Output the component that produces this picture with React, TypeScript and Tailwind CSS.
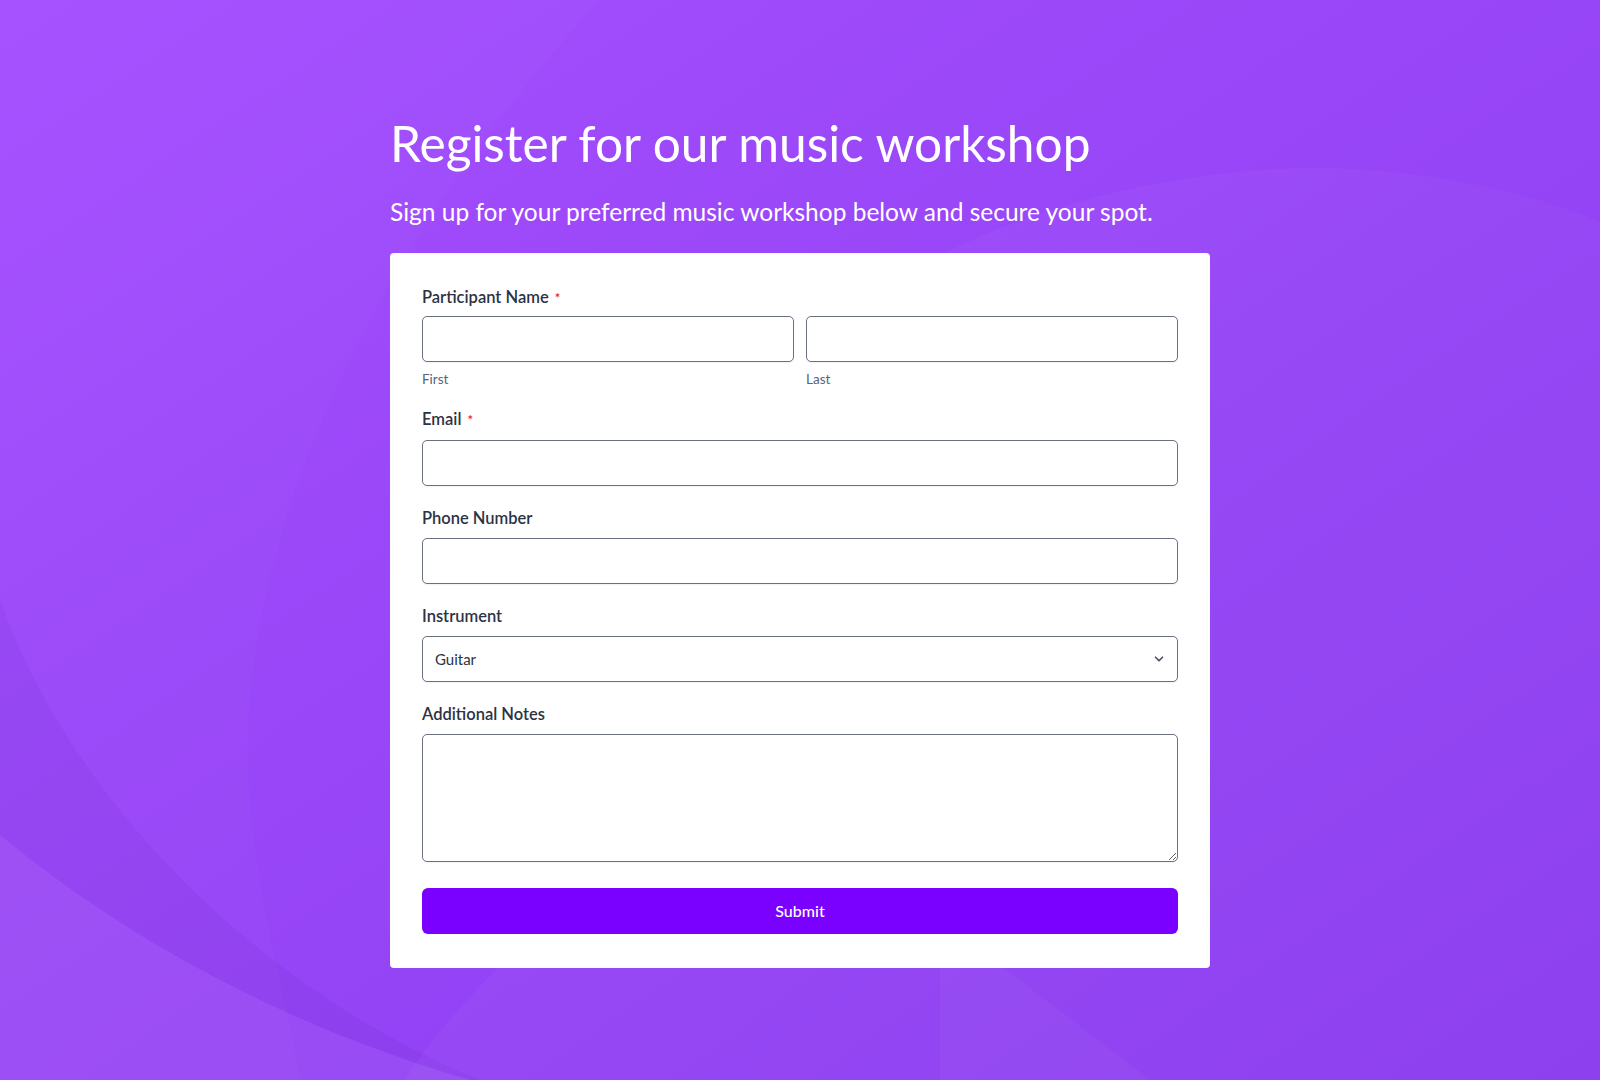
import { ChevronDown } from 'lucide-react';

const font = { fontFamily: 'Lato, "Noto Sans", sans-serif' };

function Label({ text, required, tight }: { text: string; required?: boolean; tight?: boolean }) {
  return (
    <label className={`${tight ? 'mb-1.5' : 'mb-2'} block text-[16.5px] leading-6 font-semibold text-[#2c3345]`}>
      {text}
      {required && <span className="ml-1.5 text-[13px] text-[#e4201b]">*</span>}
    </label>
  );
}

const inputClass =
  'block h-[46px] w-full rounded-[5px] border border-[#6b7180] bg-white px-3 text-[15px] text-[#2c3345] shadow-[0_1px_2px_rgba(0,0,0,0.06)] outline-none';

function Backdrop() {
  return (
    <svg className="absolute inset-0 h-full w-full" viewBox="0 0 1600 1080" preserveAspectRatio="none">
      <defs>
        <linearGradient id="bg" x1="0" y1="0" x2="1" y2="1">
          <stop offset="0" stopColor="#a64fff" />
          <stop offset="0.55" stopColor="#9544f6" />
          <stop offset="1" stopColor="#8a3aee" />
        </linearGradient>
      </defs>
      <rect width="1600" height="1080" fill="url(#bg)" />
      <path d="M940 255 C1080 185 1250 160 1370 170 C1470 178 1550 200 1600 222 L1600 1080 L940 1080 Z" fill="#ffffff" opacity="0.03" />
      <path d="M600 0 C360 260 230 560 250 800 C262 930 290 1010 300 1080 L0 1080 L0 0 Z" fill="#ffffff" opacity="0.02" />
      <path d="M0 600 C70 800 260 990 480 1080 L0 1080 Z" fill="#5b1fb0" opacity="0.09" />
      <path d="M0 835 C140 950 300 1030 470 1080 L0 1080 Z" fill="#b46bff" opacity="0.3" />
      <path d="M405 1080 C430 1040 470 995 500 965 L1000 965 L1150 1080 Z" fill="#ffffff" opacity="0.035" />
    </svg>
  );
}

export default function App() {
  return (
    <div className="relative min-h-screen w-full overflow-hidden" style={font}>
      <Backdrop />
      <div className="relative mx-auto w-[820px] pt-[115px] pb-[110px]">
        <h1 className="text-[49.6px] leading-[56px] font-normal text-white">Register for our music workshop</h1>
        <p className="mt-[25px] text-[24.5px] leading-8 font-normal text-white">
          Sign up for your preferred music workshop below and secure your spot.
        </p>

        <form className="mt-[25px] flex flex-col gap-5 rounded-[4px] bg-white px-8 pt-[32px] pb-[34px]">
          <div>
            <Label text="Participant Name" required tight />
            <div className="grid grid-cols-2 gap-3">
              <div>
                <input className={inputClass} />
                <span className="mt-[9px] block text-[13.5px] leading-4 text-[#57647e]">First</span>
              </div>
              <div>
                <input className={inputClass} />
                <span className="mt-[9px] block text-[13.5px] leading-4 text-[#57647e]">Last</span>
              </div>
            </div>
          </div>

          <div>
            <Label text="Email" required />
            <input type="email" className={inputClass} />
          </div>

          <div>
            <Label text="Phone Number" />
            <input type="tel" className={inputClass} />
          </div>

          <div>
            <Label text="Instrument" />
            <div className="relative">
              <select className={`${inputClass} appearance-none`} defaultValue="Guitar" style={font}>
                <option>Guitar</option>
                <option>Piano</option>
                <option>Violin</option>
                <option>Drums</option>
              </select>
              <ChevronDown
                size={14}
                strokeWidth={3}
                className="pointer-events-none absolute top-1/2 right-[12px] -translate-y-1/2 text-[#4b5563]"
              />
            </div>
          </div>

          <div>
            <Label text="Additional Notes" />
            <textarea className={`${inputClass} h-[128px] py-2`} />
          </div>

          <button
            type="button"
            className="mt-1.5 h-[46px] w-full rounded-[6px] bg-[#7a00ff] text-[16px] font-medium text-white"
          >
            Submit
          </button>
        </form>
      </div>
    </div>
  );
}
